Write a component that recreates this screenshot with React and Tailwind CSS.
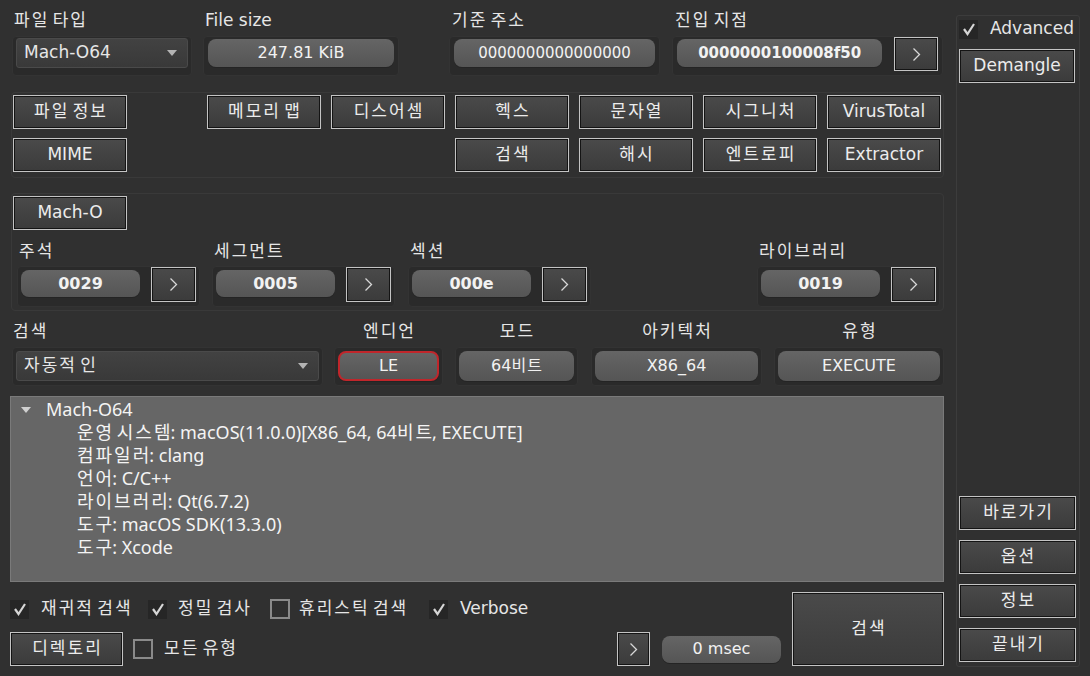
import React from 'react';

const UI = "font-[family-name:'DejaVu_Sans','Noto_Sans_CJK_KR',sans-serif]";
const TREE = "font-[family-name:'Noto_Sans','Noto_Sans_CJK_KR',sans-serif]";

// Hangul runs get extra tracking so they take the width of the bitmap font in the original
const HANGUL = /([\uAC00-\uD7A3]+)/;
const T = ({ children, tr = 'tracking-[2px] mr-[-2px]' }) =>
    typeof children === 'string' ? (
        <span className="whitespace-nowrap">
            {children.split(HANGUL).map((p, i) => (i % 2 ? <span key={i} className={tr}>{p}</span> : p))}
        </span>
    ) : (
        children
    );

const Btn = ({ children, className = '' }) => (
    <div className={`flex items-center justify-center border border-[#c4c4c4] bg-[linear-gradient(#4a4a4a,#3b3b3b)] shadow-[inset_0_0_0_1px_#141414] text-[17px] text-[#ececec] ${className}`}>
        <T>{children}</T>
    </div>
);

const Chevron = () => (
    <svg width="9" height="15" viewBox="0 0 9 15">
        <polyline points="1.5,1.5 7.5,7.5 1.5,13.5" fill="none" stroke="#d8d8d8" strokeWidth="1.3" />
    </svg>
);

const Go = ({ className = '' }) => (
    <Btn className={className}>
        <Chevron />
    </Btn>
);

const Field = ({ children, className = '' }) => (
    <div className={`flex items-center justify-center rounded-[8px] bg-[linear-gradient(#656565,#555555)] shadow-[0_1px_0_#242424] text-[#f2f2f2] ${className}`}>
        <T tr="tracking-[1px] mr-[-1px]">{children}</T>
    </div>
);

const Box = ({ children, className = '' }) => (
    <div className={`rounded-[4px] bg-[#2a2a2a] border border-[#333333] ${className}`}>{children}</div>
);

const Combo = ({ children, className = '' }) => (
    <div className={`flex items-center justify-between rounded-[3px] border border-[#4a4a4a] bg-[linear-gradient(#424242,#393939)] pl-[7px] pr-[10px] text-[17px] ${className}`}>
        <T>{children}</T>
        <svg width="10" height="6" viewBox="0 0 10 6">
            <polygon points="0,0 10,0 5,6" fill="#b4b4b4" />
        </svg>
    </div>
);

const Label = ({ children, className = '' }) => (
    <div className={`text-[17px] ${className}`}><T>{children}</T></div>
);

const Check = ({ checked, className = '' }) =>
    checked ? (
        <div className={`w-[19px] h-[19px] bg-[#262626] flex items-center justify-center shrink-0 ${className}`}>
            <svg width="14" height="14" viewBox="0 0 14 14">
                <polyline points="2,7 5.5,12 12,2" fill="none" stroke="#d6d6d6" strokeWidth="2.2" />
            </svg>
        </div>
    ) : (
        <div className={`w-[20px] h-[20px] border-2 border-[#8a8a8a] shrink-0 ${className}`} />
    );

const treeLines = [
    '운영 시스템: macOS(11.0.0)[X86_64, 64비트, EXECUTE]',
    '컴파일러: clang',
    '언어: C/C++',
    '라이브러리: Qt(6.7.2)',
    '도구: macOS SDK(13.3.0)',
    '도구: Xcode',
];

const machoStats = [
    { label: '주석', value: '0029', gap: 'ml-[4px]' },
    { label: '세그먼트', value: '0005', gap: 'ml-[12px]' },
    { label: '섹션', value: '000e', gap: 'ml-[13px]' },
    { label: '라이브러리', value: '0019', gap: 'ml-[166px]' },
];

export default function App() {
    return (
        <div className={`w-[1090px] h-[676px] bg-[#303030] flex text-[#e6e6e6] overflow-hidden ${UI}`}>
            <div className="w-[944px] pl-[10px] flex flex-col shrink-0">
                {/* top fields */}
                <div className="flex pt-[8px]">
                    <div className="ml-[2px] w-[180px]">
                        <Label className="h-[28px] leading-[24px] pl-[2px]">파일 타입</Label>
                        <Box className="h-[40px] px-[3px] pt-[1px]">
                            <Combo className="h-[30px]">Mach-O64</Combo>
                        </Box>
                    </div>
                    <div className="ml-[11px] w-[196px]">
                        <Label className="h-[28px] leading-[24px] pl-[2px]">File size</Label>
                        <Box className="h-[40px] px-[4px] pt-[2px]">
                            <Field className="h-[28px] text-[16px]">247.81 KiB</Field>
                        </Box>
                    </div>
                    <div className="ml-[50px] w-[211px]">
                        <Label className="h-[28px] leading-[24px] pl-[3px]">기준 주소</Label>
                        <Box className="h-[40px] px-[4px] pt-[2px]">
                            <Field className="h-[28px] text-[15px]">0000000000000000</Field>
                        </Box>
                    </div>
                    <div className="ml-[12px] w-[271px]">
                        <Label className="h-[28px] leading-[24px] pl-[3px]">진입 지점</Label>
                        <Box className="h-[40px] px-[4px] flex items-start">
                            <Field className="w-[207px] h-[28px] mt-[2px] text-[15px] font-bold">0000000100008f50</Field>
                            <Go className="ml-[12px] w-[44px] h-[34px]" />
                        </Box>
                    </div>
                </div>

                {/* tool buttons */}
                <div className="mt-[16px] ml-[1px] w-[933px] rounded-[4px] border border-[#393939] pt-[2px] pb-[5px] pl-[1px]">
                    <div className="flex">
                        <Btn className="w-[114px] h-[34px]">파일 정보</Btn>
                        <Btn className="ml-[80px] w-[114px] h-[34px]">메모리 맵</Btn>
                        <Btn className="ml-[10px] w-[114px] h-[34px]">디스어셈</Btn>
                        <Btn className="ml-[10px] w-[114px] h-[34px]">헥스</Btn>
                        <Btn className="ml-[10px] w-[114px] h-[34px]">문자열</Btn>
                        <Btn className="ml-[10px] w-[114px] h-[34px]">시그니처</Btn>
                        <Btn className="ml-[10px] w-[114px] h-[34px]">VirusTotal</Btn>
                    </div>
                    <div className="flex mt-[9px]">
                        <Btn className="w-[114px] h-[34px]">MIME</Btn>
                        <Btn className="ml-[328px] w-[114px] h-[34px]">검색</Btn>
                        <Btn className="ml-[10px] w-[114px] h-[34px]">해시</Btn>
                        <Btn className="ml-[10px] w-[114px] h-[34px]">엔트로피</Btn>
                        <Btn className="ml-[10px] w-[114px] h-[34px]">Extractor</Btn>
                    </div>
                </div>

                {/* Mach-O */}
                <div className="mt-[15px] ml-[1px] w-[933px] rounded-[4px] border border-[#393939] pt-[2px] pb-[3px] pl-[1px]">
                    <Btn className="w-[114px] h-[34px]">Mach-O</Btn>
                    <div className="flex">
                        {machoStats.map(s => (
                            <div key={s.label} className={`${s.gap} w-[183px]`}>
                                <Label className="h-[36px] pt-[8px] flex items-center pl-[2px]">{s.label}</Label>
                                <Box className="h-[41px] px-[3px] flex items-start">
                                    <Field className="w-[119px] h-[27px] mt-[3px] text-[16px] font-bold">{s.value}</Field>
                                    <Go className="ml-[11px] w-[45px] h-[35px]" />
                                </Box>
                            </div>
                        ))}
                    </div>
                </div>

                {/* scan options */}
                <div className="flex">
                    <div className="ml-[2px] w-[311px]">
                        <Label className="h-[36px] pt-[6px] flex items-center pl-[1px]">검색</Label>
                        <Box className="h-[39px] px-[3px] pt-[3px]">
                            <Combo className="h-[30px]">자동적 인</Combo>
                        </Box>
                    </div>
                    <div className="ml-[11px] w-[109px]">
                        <Label className="h-[36px] pt-[6px] flex items-center justify-center">엔디언</Label>
                        <Box className="h-[39px] px-[3px] pt-[3px]">
                            <Field className="h-[30px] rounded-[6px] border-2 border-[#c0262b] text-[16px]">LE</Field>
                        </Box>
                    </div>
                    <div className="ml-[12px] w-[123px]">
                        <Label className="h-[36px] pt-[6px] flex items-center justify-center">모드</Label>
                        <Box className="h-[39px] px-[3px] pt-[3px]">
                            <Field className="h-[30px] text-[16px]">64비트</Field>
                        </Box>
                    </div>
                    <div className="ml-[13px] w-[171px]">
                        <Label className="h-[36px] pt-[6px] flex items-center justify-center">아키텍처</Label>
                        <Box className="h-[39px] px-[3px] pt-[3px]">
                            <Field className="h-[30px] text-[16px]">X86_64</Field>
                        </Box>
                    </div>
                    <div className="ml-[12px] w-[170px]">
                        <Label className="h-[36px] pt-[6px] flex items-center justify-center">유형</Label>
                        <Box className="h-[39px] px-[3px] pt-[3px]">
                            <Field className="h-[30px] text-[16px]">EXECUTE</Field>
                        </Box>
                    </div>
                </div>

                {/* result tree */}
                <div className={`mt-[10px] w-[934px] h-[186px] bg-[#666666] border border-[#7a7a7a] pt-[1px] text-[18px] leading-[23px] text-[#f4f4f4] ${TREE}`}>
                    <div className="flex items-center pl-[10px]">
                        <svg width="10" height="6" viewBox="0 0 10 6">
                            <polygon points="0,0 10,0 5,6" fill="#d0d0d0" />
                        </svg>
                        <span className="ml-[15px]">Mach-O64</span>
                    </div>
                    {treeLines.map((l, i) => (
                        <div key={i} className="pl-[66px]"><T>{l}</T></div>
                    ))}
                </div>

                {/* bottom */}
                <div className="flex">
                    <div className="flex-1 flex flex-col">
                        <div className="mt-[15px] h-[24px] flex items-center text-[17px]">
                            <div className="w-[138px] flex items-center"><Check checked /><span className="ml-[12px]"><T>재귀적 검색</T></span></div>
                            <div className="w-[122px] flex items-center"><Check checked /><span className="ml-[11px]"><T>정밀 검사</T></span></div>
                            <div className="w-[159px] flex items-center"><Check /><span className="ml-[9px]"><T>휴리스틱 검색</T></span></div>
                            <div className="flex items-center"><Check checked /><span className="ml-[12px]">Verbose</span></div>
                        </div>
                        <div className="mt-[11px] h-[34px] flex items-center">
                            <Btn className="w-[113px] h-[34px]">디렉토리</Btn>
                            <Check className="ml-[10px]" />
                            <span className="ml-[11px] text-[17px]"><T>모든 유형</T></span>
                            <Go className="ml-auto w-[33px] h-[34px]" />
                            <Field className="ml-[12px] w-[119px] h-[27px] text-[16px]">0 msec</Field>
                        </div>
                    </div>
                    <Btn className="ml-[11px] mt-[10px] w-[152px] h-[74px]">검색</Btn>
                </div>
            </div>

            {/* side panel */}
            <div className="ml-[12px] mt-[15px] w-[124px] h-[652px] rounded-[3px] border border-[#3c3c3c] flex flex-col pl-[2px] pb-[4px]">
                <div className="mt-[2px] h-[22px] flex items-center">
                    <Check checked />
                    <span className="ml-[12px] text-[17px]">Advanced</span>
                </div>
                <Btn className="mt-[9px] w-[116px] h-[34px]">Demangle</Btn>
                <div className="flex-1" />
                <Btn className="w-[117px] h-[34px]">바로가기</Btn>
                <Btn className="mt-[10px] w-[117px] h-[34px]">옵션</Btn>
                <Btn className="mt-[10px] w-[117px] h-[34px]">정보</Btn>
                <Btn className="mt-[10px] w-[117px] h-[34px]">끝내기</Btn>
            </div>
        </div>
    );
}
